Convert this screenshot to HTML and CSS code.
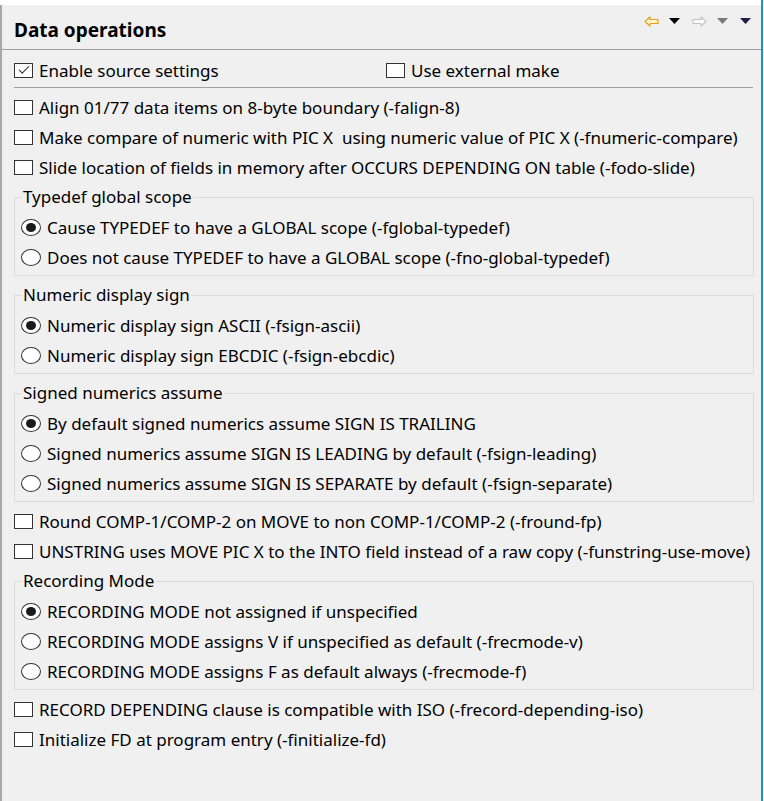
FILE: index.html
```html
<!DOCTYPE html>
<html>
<head>
<meta charset="utf-8">
<link rel="stylesheet" href="styles.css">
</head>
<body>
<div class="topstrip"></div>
<div class="window">
  <div class="header">
    <div class="title">Data operations</div>
    <div class="toolbar">
      <svg class="ico arrow" width="15" height="11" viewBox="0 0 15 11"><path d="M1 5.5 L6 1 V3.5 H14 V7.5 H6 V10 Z" fill="#fff4c8" stroke="#e6a020" stroke-width="1.2" stroke-linejoin="round"/></svg>
      <svg class="ico tri" width="11" height="6" viewBox="0 0 11 6"><path d="M0 0 H11 L5.5 6 Z" fill="#000"/></svg>
      <svg class="ico arrow" width="15" height="11" viewBox="0 0 15 11"><path d="M14 5.5 L9 1 V3.5 H1 V7.5 H9 V10 Z" fill="#fbfbfb" stroke="#c4c4c4" stroke-width="1.1" stroke-linejoin="round"/></svg>
      <svg class="ico tri" width="11" height="6" viewBox="0 0 11 6"><path d="M0 0 H11 L5.5 6 Z" fill="#7a7a7a"/></svg>
      <svg class="ico tri last" width="11" height="6" viewBox="0 0 11 6"><path d="M0 0 H11 L5.5 6 Z" fill="#1e1e46"/></svg>
    </div>
  </div>
  <div class="content">
    <div class="row">
      <label class="opt half"><span class="cb checked"></span>Enable source settings</label>
      <label class="opt"><span class="cb"></span>Use external make</label>
    </div>
    <div class="sep"></div>
    <label class="opt row"><span class="cb"></span>Align 01/77 data items on 8-byte boundary (-falign-8)</label>
    <label class="opt row"><span class="cb"></span>Make compare of numeric with PIC X &nbsp;using numeric value of PIC X (-fnumeric-compare)</label>
    <label class="opt row"><span class="cb"></span>Slide location of fields in memory after OCCURS DEPENDING ON table (-fodo-slide)</label>
    <div class="group">
      <div class="legend">Typedef global scope</div>
      <label class="opt row"><span class="rb on"></span>Cause TYPEDEF to have a GLOBAL scope (-fglobal-typedef)</label>
      <label class="opt row"><span class="rb"></span>Does not cause TYPEDEF to have a GLOBAL scope (-fno-global-typedef)</label>
    </div>
    <div class="group">
      <div class="legend">Numeric display sign</div>
      <label class="opt row"><span class="rb on"></span>Numeric display sign ASCII (-fsign-ascii)</label>
      <label class="opt row"><span class="rb"></span>Numeric display sign EBCDIC (-fsign-ebcdic)</label>
    </div>
    <div class="group">
      <div class="legend">Signed numerics assume</div>
      <label class="opt row"><span class="rb on"></span>By default signed numerics assume SIGN IS TRAILING</label>
      <label class="opt row"><span class="rb"></span>Signed numerics assume SIGN IS LEADING by default (-fsign-leading)</label>
      <label class="opt row"><span class="rb"></span>Signed numerics assume SIGN IS SEPARATE by default (-fsign-separate)</label>
    </div>
    <label class="opt row"><span class="cb"></span>Round COMP-1/COMP-2 on MOVE to non COMP-1/COMP-2 (-fround-fp)</label>
    <label class="opt row"><span class="cb"></span>UNSTRING uses MOVE PIC X to the INTO field instead of a raw copy (-funstring-use-move)</label>
    <div class="group">
      <div class="legend">Recording Mode</div>
      <label class="opt row"><span class="rb on"></span>RECORDING MODE not assigned if unspecified</label>
      <label class="opt row"><span class="rb"></span>RECORDING MODE assigns V if unspecified as default (-frecmode-v)</label>
      <label class="opt row"><span class="rb"></span>RECORDING MODE assigns F as default always (-frecmode-f)</label>
    </div>
    <label class="opt row"><span class="cb"></span>RECORD DEPENDING clause is compatible with ISO (-frecord-depending-iso)</label>
    <label class="opt row"><span class="cb"></span>Initialize FD at program entry (-finitialize-fd)</label>
  </div>
</div>
</body>
</html>
```
FILE: styles.css
```css
html, body {
  margin: 0;
  padding: 0;
}
body {
  background: #f0f0f0;
  font-family: "Noto Sans", "Open Sans", sans-serif;
  font-size: 17px;
  color: #000;
  width: 764px;
  height: 801px;
  overflow: hidden;
}
.topstrip {
  height: 5px;
  width: 763px;
  background: #fff;
  border-right: 2px solid #2b88d8;
  box-sizing: border-box;
}
.window {
  height: 796px;
  width: 763px;
  border-left: 2px solid #a8a8a8;
  border-right: 2px solid #2b88d8;
  box-sizing: border-box;
}
.header {
  height: 45px;
  border-bottom: 1px solid #a0a0a0;
  display: flex;
  justify-content: space-between;
  padding: 0 10px 0 12px;
  box-sizing: border-box;
}
.title {
  font-weight: bold;
  font-size: 19px;
  line-height: 26px;
  margin-top: 12px;
}
.toolbar {
  display: flex;
  align-items: center;
  height: 12px;
  margin-top: 10px;
}
.ico {
  display: block;
  flex: none;
}
.arrow {
  margin-right: 10px;
}
.tri {
  margin-right: 12px;
}
.tri.last {
  margin-right: 0;
}
.content {
  display: flex;
  flex-direction: column;
  padding: 5px 7px 0 12px;
}
.row {
  height: 30px;
  display: flex;
  align-items: center;
}
.half {
  width: 372px;
}
.opt {
  display: flex;
  align-items: center;
  white-space: nowrap;
}
.sep {
  height: 1px;
  background: #a0a0a0;
  margin: 2px 1px 4px 0;
}
.cb {
  width: 17px;
  height: 13px;
  border: 1px solid #333;
  background: #fff;
  margin-right: 6px;
  flex: none;
  position: relative;
}
.cb.checked::after {
  content: "";
  position: absolute;
  left: 4px;
  top: 2px;
  width: 9px;
  height: 4px;
  border-left: 1.3px solid #333;
  border-bottom: 1.3px solid #333;
  transform: rotate(-45deg);
}
.group {
  border: 1px solid #dcdcdc;
  margin: 15px 0 4px 0;
  padding: 14px 0 3px 6px;
  position: relative;
  display: flex;
  flex-direction: column;
}
.legend {
  position: absolute;
  top: -11px;
  left: 7px;
  background: #f0f0f0;
  padding: 0 1px;
  line-height: 20px;
}
.rb {
  width: 20px;
  height: 17px;
  border: 1px solid #333;
  border-radius: 50%;
  background: #fff;
  margin-right: 6px;
  flex: none;
  box-sizing: border-box;
  position: relative;
}
.rb.on::after {
  content: "";
  position: absolute;
  left: 4px;
  top: 3px;
  width: 10px;
  height: 9px;
  border-radius: 50%;
  background: #1a1a1a;
}
```
